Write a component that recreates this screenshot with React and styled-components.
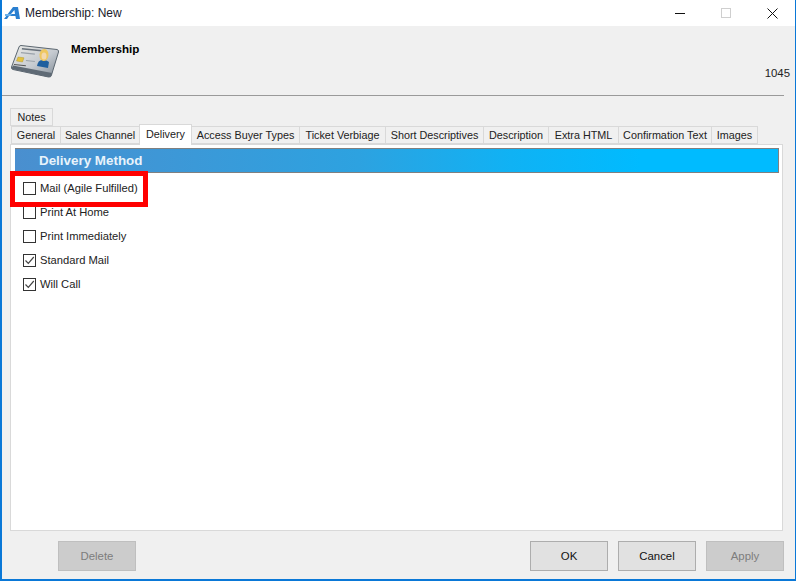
import React from "react";
import styled, { createGlobalStyle } from "styled-components";

const Global = createGlobalStyle`
  html, body { margin: 0; padding: 0; background: #f0f0f0; }
  body { font-family: "Liberation Sans", Arial, sans-serif; font-size: 11.4px; color: #111; }
  * { box-sizing: border-box; }
`;
const Window = styled.div`
  position: relative; width: 796px; height: 581px; background: #f0f0f0;
  border: 1px solid #0a78d7; border-width: 0 1px 2px 2px; display: flex; flex-direction: column;
`;
const TitleBar = styled.div`
  height: 26px; background: #fff; display: flex; align-items: center; flex: none;
  padding-left: 2px;
`;
const TitleText = styled.span`
  margin-left: 4px; font-size: 12px; color: #1a1a2a; line-height: 26px;
`;
const WinButtons = styled.div`
  margin-left: auto; display: flex; align-items: center; height: 100%;
`;
const WinButton = styled.div`
  width: 46px; height: 26px; display: flex; align-items: center; justify-content: center;
  color: ${p => p.$dim ? "#cfcfcf" : "#111"};
`;
const Header = styled.div`
  height: 70px; flex: none; display: flex; padding: 0 5px 0 9px; position: relative;
`;
const HeaderIcon = styled.div`
  width: 50px; margin-top: 19px; height: 33px; flex: none;
`;
const HeaderTitle = styled.div`
  font-weight: 700; font-size: 11.6px; margin: 16px 0 0 10px; color: #000;
`;
const RecordId = styled.div`
  margin-left: auto; margin-top: 41px; font-size: 11.4px; color: #222;
`;
const Divider = styled.div`
  height: 1px; flex: none; margin: -1px 11px 0 0; background: #9a9a9a;
`;
const Content = styled.div`
  flex: 1; display: flex; flex-direction: column; padding: 12px 0 0 8px; min-height: 0;
`;
const TabRow = styled.div`
  display: flex; align-items: flex-end; height: 18px; padding-left: ${p => p.$pl}px; flex: none;
`;
const Tab = styled.div`
  width: ${p => p.$w}px; height: ${p => p.$active ? 21 : 18}px; flex: none;
  display: flex; align-items: center; justify-content: center; font-size: 10.8px; white-space: nowrap;
  color: #222; background: ${p => p.$active ? "#fff" : "#f0f0f0"};
  border: 1px solid #d9d9d9; border-bottom: ${p => p.$active ? "0" : "1px solid #d9d9d9"};
  margin-right: -1px;
  position: relative; z-index: ${p => p.$active ? 2 : 1};
  padding-bottom: ${p => p.$active ? 3 : 0}px;
  margin-bottom: ${p => p.$active ? -1 : 0}px;
`;
const Panel = styled.div`
  width: 773px; height: 387px; background: #fff; border: 1px solid #d9d9d9; padding: 3px 3px 0 4px; flex: none;
`;
const BandTitle = styled.div`
  height: 25px; width: 764px; border: 1px solid #808080; border-width: 1px 1px 1px 0;
  background: linear-gradient(90deg, #4a8fcf 0%, #2da2e0 45%, #10b2f4 65%, #00bbff 82%);
  color: #e8f3fb; font-weight: 700; font-size: 13.4px; display: flex; align-items: center; padding-left: 24px;
`;
const OptionList = styled.div`
  display: flex; flex-direction: column; padding: 3px 0 0 8px;
`;
const Option = styled.label`
  display: flex; align-items: center; height: 24px; font-size: 11.2px; color: #222; white-space: nowrap;
`;
const Box = styled.span`
  width: 13px; height: 13px; border: 1px solid #333; background: #fff; margin-right: 4px; flex: none;
  display: flex; align-items: center; justify-content: center;
`;
const Highlight = styled.div`
  position: absolute; left: 8px; top: 171px; width: 138px; height: 36px; border: 5px solid #f00; pointer-events: none; z-index: 5;
`;
const Footer = styled.div`
  flex: 1; display: flex; align-items: flex-start; padding: 10px 0 0 48px;
`;
const Btn = styled.div`
  width: 78px; height: 30px; flex: none; display: flex; align-items: center; justify-content: center; font-size: 11.4px;
  background: ${p => p.$disabled ? "#cccccc" : "#e1e1e1"};
  border: 1px solid ${p => p.$disabled ? "#bfbfbf" : "#adadad"};
  color: ${p => p.$disabled ? "#7d7d7d" : "#111"};
  margin-left: ${p => p.$ml || 0}px;
`;

const Logo = () => (
  <svg width="17" height="14" viewBox="0 0 17 14">
    <path d="M0 13 L9 1 H14 L16 13 H12 L11.4 10 H5 L3 13 Z M7 8 H11 L10.4 4 Z" fill="#2a7fd0" fillRule="evenodd" />
    <path d="M1 8 H8 L6.5 10 H1 Z" fill="#6ab0ea" />
  </svg>
);
const CardIcon = () => (
  <svg width="50" height="33" viewBox="0 0 50 33">
    <defs>
      <linearGradient id="c" x1="0" y1="0" x2="1" y2="1">
        <stop offset="0" stopColor="#ececE8" />
        <stop offset="0.55" stopColor="#c5cad0" />
        <stop offset="1" stopColor="#7f8a95" />
      </linearGradient>
    </defs>
    <path d="M10 0.500 L46 4.500 Q48 5 47.500 7 L40.500 30 Q40 32.500 37.500 32 L2 24.500 Q0 24 0.500 22 L8 2 Q8.500 0.500 10 0.500 Z" fill="url(#c)" stroke="#5b6670" />
    <path d="M1 22.500 L0.800 24 L37.500 32 Q40 32.500 40.500 30 L41 28 L2 20.500 Z" fill="#5f6a75" />
    <rect x="11" y="3" width="20" height="1.500" fill="#67707a" transform="rotate(6 11 3)" />
    <rect x="10" y="7" width="14" height="1.200" fill="#9aa2aa" transform="rotate(6 10 7)" />
    <path d="M7 12 L13 12.800 L11.500 17 L5.500 16 Z" fill="#e4c23f" stroke="#a98d22" strokeWidth="0.4" />
    <rect x="15" y="15" width="9" height="1" fill="#9aa2aa" transform="rotate(6 15 15)" />
    <rect x="3" y="19" width="12" height="1" fill="#555" transform="rotate(6 3 19)" />
    <path d="M26 21 Q27 15 31 15 Q36 15 38 17 L37 23 Z" fill="#1f5f9e" />
    <ellipse cx="33" cy="10" rx="4.500" ry="6" fill="#efc760" transform="rotate(8 33 10)" />
    <ellipse cx="33" cy="11" rx="2.500" ry="3.500" fill="#f4d8ae" />
  </svg>
);
const Check = () => (
  <svg width="11" height="11" viewBox="0 0 11 11">
    <path d="M1.500 5.500 L4.300 8.300 L9.800 2" fill="none" stroke="#444" strokeWidth="1.200" />
  </svg>
);

const tabs = [
  ["General", 50], ["Sales Channel", 80], ["Delivery", 53, true], ["Access Buyer Types", 109],
  ["Ticket Verbiage", 87], ["Short Descriptives", 99], ["Description", 66], ["Extra HTML", 71],
  ["Confirmation Text", 94], ["Images", 47],
];
const options = [
  ["Mail (Agile Fulfilled)", false], ["Print At Home", false], ["Print Immediately", false],
  ["Standard Mail", true], ["Will Call", true],
];

export default function App() {
  return (
    <>
      <Global />
      <Window>
        <TitleBar>
          <Logo />
          <TitleText>Membership: New</TitleText>
          <WinButtons>
            <WinButton>
              <svg width="10" height="10" viewBox="0 0 10 10"><path d="M0 5.500H10" stroke="#111" /></svg>
            </WinButton>
            <WinButton $dim>
              <svg width="10" height="10" viewBox="0 0 10 10"><rect x="0.500" y="0.500" width="9" height="9" fill="none" stroke="currentColor" /></svg>
            </WinButton>
            <WinButton>
              <svg width="11" height="11" viewBox="0 0 11 11"><path d="M0.500 0.500L10.500 10.500M10.500 0.500L0.500 10.500" stroke="#111" /></svg>
            </WinButton>
          </WinButtons>
        </TitleBar>
        <Header>
          <HeaderIcon><CardIcon /></HeaderIcon>
          <HeaderTitle>Membership</HeaderTitle>
          <RecordId>1045</RecordId>
        </Header>
        <Divider />
        <Content>
          <TabRow $pl={0}><Tab $w={43}>Notes</Tab></TabRow>
          <TabRow $pl={1}>
            {tabs.map(([t, w, a]) => <Tab key={t} $w={w} $active={a}>{t}</Tab>)}
          </TabRow>
          <Panel>
            <BandTitle>Delivery Method</BandTitle>
            <OptionList>
              {options.map(([t, c]) => (
                <Option key={t}><Box>{c && <Check />}</Box>{t}</Option>
              ))}
            </OptionList>
          </Panel>
          <Footer>
            <Btn $disabled>Delete</Btn>
            <Btn $ml={394}>OK</Btn>
            <Btn $ml={10}>Cancel</Btn>
            <Btn $disabled $ml={10}>Apply</Btn>
          </Footer>
        </Content>
        <Highlight />
      </Window>
    </>
  );
}
